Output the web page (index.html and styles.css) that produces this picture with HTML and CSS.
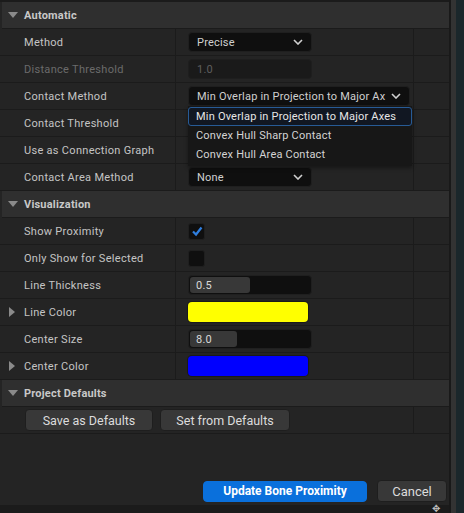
FILE: index.html
```html
<!DOCTYPE html>
<html lang="en">
<head>
    <meta charset="UTF-8">
    <title>Bone Proximity</title>
    <link rel="stylesheet" href="styles.css">
</head>
<body>
    <div class="window">
        <div class="panel">
            <div class="details">
                <div class="category"><span class="caret down"></span>Automatic</div>
                <div class="row">
                    <div class="name">Method</div>
                    <div class="value"><div class="combo short"><span>Precise</span><svg class="chev" viewBox="0 0 10 6"><path d="M1 1 L5 5 L9 1"/></svg></div></div>
                    <div class="extra"></div>
                </div>
                <div class="row">
                    <div class="name disabled">Distance Threshold</div>
                    <div class="value"><div class="input short off">1.0</div></div>
                    <div class="extra"></div>
                </div>
                <div class="row">
                    <div class="name">Contact Method</div>
                    <div class="value"><div class="combo long"><span>Min Overlap in Projection to Major Ax</span><svg class="chev" viewBox="0 0 10 6"><path d="M1 1 L5 5 L9 1"/></svg></div></div>
                    <div class="extra"></div>
                </div>
                <div class="row">
                    <div class="name">Contact Threshold</div>
                    <div class="value"></div>
                    <div class="extra"></div>
                </div>
                <div class="row">
                    <div class="name">Use as Connection Graph</div>
                    <div class="value"></div>
                    <div class="extra"></div>
                </div>
                <div class="row">
                    <div class="name">Contact Area Method</div>
                    <div class="value"><div class="combo short"><span>None</span><svg class="chev" viewBox="0 0 10 6"><path d="M1 1 L5 5 L9 1"/></svg></div></div>
                    <div class="extra"></div>
                </div>

                <div class="category"><span class="caret down"></span>Visualization</div>
                <div class="row">
                    <div class="name">Show Proximity</div>
                    <div class="value"><div class="check"><svg viewBox="0 0 12 12"><path d="M2 6.5 L5 9.5 L10.5 2.5"/></svg></div></div>
                    <div class="extra"></div>
                </div>
                <div class="row">
                    <div class="name">Only Show for Selected</div>
                    <div class="value"><div class="check"></div></div>
                    <div class="extra"></div>
                </div>
                <div class="row">
                    <div class="name">Line Thickness</div>
                    <div class="value"><div class="input short num"><span class="fill" style="width: 60px"></span><span class="txt">0.5</span></div></div>
                    <div class="extra"></div>
                </div>
                <div class="row">
                    <div class="name"><span class="caret right"></span>Line Color</div>
                    <div class="value"><div class="swatch" style="background: #ffff00"></div></div>
                    <div class="extra"></div>
                </div>
                <div class="row">
                    <div class="name">Center Size</div>
                    <div class="value"><div class="input short num"><span class="fill" style="width: 47px"></span><span class="txt">8.0</span></div></div>
                    <div class="extra"></div>
                </div>
                <div class="row">
                    <div class="name"><span class="caret right"></span>Center Color</div>
                    <div class="value"><div class="swatch" style="background: #0000ff"></div></div>
                    <div class="extra"></div>
                </div>

                <div class="category"><span class="caret down"></span>Project Defaults</div>
                <div class="row buttons">
                    <div class="btn-group">
                        <button class="btn save">Save as Defaults</button>
                        <button class="btn load">Set from Defaults</button>
                    </div>
                    <div class="extra"></div>
                </div>

                <!-- open combo list for Contact Method -->
                <div class="menu">
                    <div class="item selected">Min Overlap in Projection to Major Axes</div>
                    <div class="item">Convex Hull Sharp Contact</div>
                    <div class="item">Convex Hull Area Contact</div>
                </div>
            </div>

            <div class="footer">
                <button class="btn primary">Update Bone Proximity</button>
                <button class="btn cancel">Cancel</button>
            </div>
            <div class="status"><span class="grip">✥</span></div>
        </div>
        <div class="edge"><div class="edge-gray"></div><div class="edge-dark"></div></div>
    </div>
</body>
</html>
```

FILE: styles.css
```css
body{
    margin: 0;
    background-color: #1c1c1c;
    font-family: Roboto, "Liberation Sans", sans-serif;
    font-size: 11px;
    color: #c4c4c4;
}
.window{
    display: flex;
    width: 464px;
    height: 513px;
    overflow: hidden;
}
.panel{
    width: 449px;
    display: flex;
    flex-direction: column;
    background-color: #242424;
    border-top: 2px solid #1b1b1b;
}
.details{
    position: relative;
    flex: 1;
}
.category{
    display: flex;
    align-items: center;
    height: 26px;
    margin-left: 2px;
    background-color: #2f2f2f;
    border-bottom: 1px solid #1b1b1b;
    font-weight: bold;
    letter-spacing: 0.2px;
    color: #c8c8c8;
    padding-left: 22px;
    position: relative;
}
.caret{
    position: absolute;
    width: 0;
    height: 0;
}
.caret.down{
    left: 6px;
    top: 10px;
    border-left: 5px solid transparent;
    border-right: 5px solid transparent;
    border-top: 6px solid #8a8a8a;
}
.caret.right{
    left: 9px;
    top: 8px;
    border-top: 5px solid transparent;
    border-bottom: 5px solid transparent;
    border-left: 6px solid #8a8a8a;
}
.row{
    display: grid;
    grid-template-columns: 176px 238px 35px;
    height: 26px;
    border-bottom: 1px solid #1b1b1b;
}
.name{
    position: relative;
    display: flex;
    align-items: center;
    padding-left: 24px;
    border-right: 1px solid #1b1b1b;
    letter-spacing: 0.3px;
}
.name.disabled{
    color: #6b6b6b;
}
.value{
    display: flex;
    align-items: center;
    padding-left: 12px;
    border-right: 1px solid #1b1b1b;
}
.combo,
.input{
    box-sizing: border-box;
    height: 20px;
    border-radius: 4px;
    background-color: #0f0f0f;
    border: 1px solid #1f1f1f;
    display: flex;
    align-items: center;
    padding-left: 8px;
    letter-spacing: 0.2px;
}
.combo{
    justify-content: space-between;
    padding-right: 8px;
    color: #cfcfcf;
}
.short{
    width: 124px;
}
.long{
    width: 222px;
    white-space: nowrap;
}
.chev{
    width: 10px;
    height: 6px;
    fill: none;
    stroke: #d0d0d0;
    stroke-width: 1.6;
}
.input.off{
    background-color: #1a1a1a;
    border-color: #1e1e1e;
    color: #5e5e5e;
}
.input.num{
    position: relative;
    padding-left: 0;
}
.fill{
    position: absolute;
    left: 1px;
    top: 1px;
    bottom: 1px;
    border-radius: 3px;
    background-color: #383838;
}
.txt{
    position: relative;
    padding-left: 7px;
    color: #d8d8d8;
}
.check{
    box-sizing: border-box;
    width: 17px;
    height: 17px;
    border-radius: 3px;
    background-color: #0f0f0f;
    border: 1px solid #1f1f1f;
    display: flex;
    align-items: center;
    justify-content: center;
}
.check svg{
    width: 12px;
    height: 12px;
    fill: none;
    stroke: #2f7fe0;
    stroke-width: 2.2;
}
.swatch{
    width: 120px;
    height: 20px;
    border-radius: 4px;
    box-shadow: 0 0 0 1px #1a1a1a;
}
.buttons{
    grid-template-columns: 414px 35px;
}
.btn-group{
    display: flex;
    align-items: center;
    gap: 7px;
    padding-left: 25px;
    border-right: 1px solid #1b1b1b;
}
.btn{
    font-family: Roboto, "Liberation Sans", sans-serif;
    font-size: 12.5px;
    color: #dcdcdc;
    background-color: #383838;
    border: 1px solid #1e1e1e;
    border-radius: 4px;
    padding: 0;
    height: 22px;
}
.save{
    width: 128px;
}
.load{
    width: 130px;
}
.menu{
    position: absolute;
    left: 188px;
    top: 104px;
    width: 224px;
    padding-top: 1px;
    height: 59px;
    background-color: #171717;
    box-shadow: 0 2px 4px rgba(0, 0, 0, 0.4);
}
.item{
    box-sizing: border-box;
    height: 19px;
    display: flex;
    align-items: center;
    padding-left: 8px;
    color: #d4d4d4;
    letter-spacing: 0.2px;
}
.item.selected{
    border: 1px solid #275b96;
    border-radius: 3px;
    background-color: #111722;
    padding-left: 7px;
    color: #e6e6e6;
}
.footer{
    display: flex;
    justify-content: flex-end;
    align-items: center;
    gap: 10px;
    padding-right: 2px;
    height: 26px;
    margin-bottom: 1px;
}
.primary{
    width: 164px;
    height: 21px;
    background-color: #0a70dc;
    border-color: #0a70dc;
    color: #ffffff;
    font-weight: bold;
    font-size: 12px;
}
.cancel{
    width: 70px;
    height: 22px;
    font-size: 13px;
}
.status{
    height: 8px;
    background-color: #1b1b1b;
    position: relative;
}
.grip{
    position: absolute;
    left: 432px;
    top: -2px;
    font-size: 10px;
    color: #bdbdbd;
}
.edge{
    display: flex;
    flex: 1;
}
.edge-gray{
    width: 5px;
    border-left: 2px solid #191919;
    background-color: #333333;
}
.edge-dark{
    flex: 1;
    background-color: #1b272b;
}
```
